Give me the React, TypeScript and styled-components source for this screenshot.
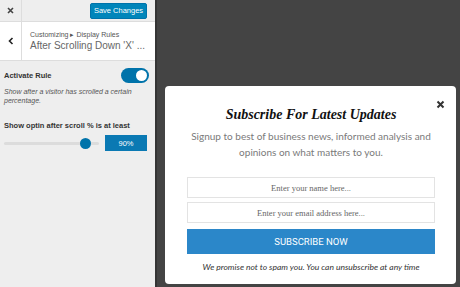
import React from "react";
import styled, { createGlobalStyle } from "styled-components";

const Global = createGlobalStyle`
  html, body { margin: 0; padding: 0; }
  body { font-family: "Liberation Sans", Arial, sans-serif; background: #444; }
`;

const Page = styled.div`
  display: flex;
  width: 460px;
  height: 287px;
  overflow: hidden;
  background: #444444;
`;

const Sidebar = styled.aside`
  width: 155px;
  flex: none;
  background: #eeeeee;
  border-right: 2px solid #353535;
  display: flex;
  flex-direction: column;
`;

const TopBar = styled.div`
  height: 21px;
  display: flex;
  align-items: center;
  border-bottom: 1px solid #dddddd;
`;

const IconCell = styled.div<{ $h?: number }>`
  width: 21px;
  align-self: stretch;
  display: flex;
  align-items: center;
  justify-content: center;
  border-right: 1px solid #dddddd;
  color: #444;
  flex: none;
`;

const SaveButton = styled.button`
  margin-left: auto;
  margin-right: 8px;
  height: 16px;
  width: 57px;
  padding: 0;
  border: 1px solid #0073aa;
  border-radius: 2px;
  background: #0085ba;
  color: #fff;
  font-family: "Liberation Sans", Arial, sans-serif;
  font-size: 7.5px;
  line-height: 14px;
`;

const Header = styled.div`
  height: 38px;
  display: flex;
  background: #fff;
  border-bottom: 1px solid #dddddd;
`;

const HeaderText = styled.div`
  padding-left: 8px;
  display: flex;
  flex-direction: column;
  justify-content: center;
  min-width: 0;
`;

const Crumb = styled.div`
  font-size: 7px;
  line-height: 9px;
  color: #555;
`;

const PaneTitle = styled.div`
  font-size: 10px;
  line-height: 13px;
  color: #666;
  white-space: nowrap;
`;

const Section = styled.div`
  padding: 7px 6px 0 4px;
  display: flex;
  flex-direction: column;
`;

const ToggleRow = styled.div`
  display: flex;
  align-items: center;
  justify-content: space-between;
  height: 15px;
`;

const Label = styled.div`
  font-size: 7.5px;
  font-weight: bold;
  color: #333;
`;

const Toggle = styled.div<{ $on: boolean }>`
  width: 28px;
  height: 15px;
  border-radius: 8px;
  background: ${(p) => (p.$on ? "#0073aa" : "#ccc")};
  position: relative;
  flex: none;
  &::after {
    content: "";
    position: absolute;
    top: 2px;
    left: ${(p) => (p.$on ? "15px" : "2px")};
    width: 11px;
    height: 11px;
    border-radius: 50%;
    background: #fff;
  }
`;

const Description = styled.div`
  margin-top: 4px;
  font-size: 7px;
  line-height: 9px;
  font-style: italic;
  color: #555;
`;

const SliderLabel = styled(Label)`
  margin-top: 16px;
`;

const SliderRow = styled.div`
  margin-top: 5px;
  display: flex;
  align-items: center;
  height: 16px;
  padding-right: 2px;
`;

const Track = styled.div`
  flex: none;
  width: 95px;
  height: 3px;
  border-radius: 2px;
  background: #dcdcdc;
  position: relative;
`;

const Thumb = styled.div`
  position: absolute;
  top: -4px;
  width: 11px;
  height: 11px;
  margin-left: -5.5px;
  border-radius: 50%;
  background: #0073aa;
`;

const ValueBox = styled.div`
  margin-left: auto;
  width: 42px;
  height: 16px;
  background: #0a79b3;
  color: #fff;
  font-size: 7.5px;
  display: flex;
  align-items: center;
  justify-content: center;
`;

const Preview = styled.main`
  flex: 1;
  padding: 86px 0 0 8px;
`;

const Modal = styled.div`
  width: 291px;
  height: 198px;
  box-sizing: border-box;
  background: #fff;
  border-radius: 4px;
  position: relative;
  display: flex;
  flex-direction: column;
  align-items: center;
  padding: 20px 21px 0 22px;
`;

const Close = styled.div`
  position: absolute;
  top: 9px;
  right: 11px;
  width: 9px;
  height: 9px;
`;

const Title = styled.h2`
  margin: 0;
  font-family: "Liberation Serif", "Times New Roman", serif;
  font-style: italic;
  font-weight: bold;
  font-size: 14px;
  line-height: 18px;
  color: #111;
`;

const Sub = styled.p`
  margin: 4px 0 0;
  font-family: Lato, "Open Sans", sans-serif;
  font-size: 10px;
  line-height: 16px;
  color: #7a7a7a;
  text-align: center;
`;

const Form = styled.div`
  margin-top: 17px;
  width: 100%;
  display: flex;
  flex-direction: column;
  gap: 4px;
`;

const Field = styled.input`
  box-sizing: border-box;
  width: 100%;
  height: 21px;
  border: 1px solid #e3e3e3;
  background: #fff;
  text-align: center;
  font-family: "Liberation Serif", "Times New Roman", serif;
  font-size: 8.5px;
  outline: none;
  &::placeholder { color: #666; }
`;

const Subscribe = styled.button`
  margin-top: 2px;
  height: 25px;
  width: 100%;
  border: none;
  background: #2b87c9;
  color: #fff;
  font-family: Roboto, "Liberation Sans", sans-serif;
  font-size: 9.5px;
  letter-spacing: 0;
`;

const Note = styled.p`
  margin: 8px 0 0;
  font-family: Lato, "Open Sans", sans-serif;
  font-style: italic;
  font-size: 8.5px;
  color: #333;
`;

export default function App() {
  return (
    <>
      <Global />
      <Page>
        <Sidebar>
          <TopBar>
            <IconCell>
              <svg width="7" height="7" viewBox="0 0 7 7">
                <path d="M1 1L6 6M6 1L1 6" stroke="#444" strokeWidth="1.6" />
              </svg>
            </IconCell>
            <SaveButton>Save Changes</SaveButton>
          </TopBar>
          <Header>
            <IconCell>
              <svg width="6" height="8" viewBox="0 0 6 8">
                <path d="M4.5 1L1.5 4L4.5 7" stroke="#222" strokeWidth="1.6" fill="none" />
              </svg>
            </IconCell>
            <HeaderText>
              <Crumb>Customizing ▸ Display Rules</Crumb>
              <PaneTitle>After Scrolling Down 'X' ...</PaneTitle>
            </HeaderText>
          </Header>
          <Section>
            <ToggleRow>
              <Label>Activate Rule</Label>
              <Toggle $on />
            </ToggleRow>
            <Description>
              Show after a visitor has scrolled a certain percentage.
            </Description>
            <SliderLabel>Show optin after scroll % is at least</SliderLabel>
            <SliderRow>
              <Track>
                <Thumb style={{ left: "86%" }} />
              </Track>
              <ValueBox>90%</ValueBox>
            </SliderRow>
          </Section>
        </Sidebar>
        <Preview>
          <Modal>
            <Close>
              <svg width="9" height="9" viewBox="0 0 9 9">
                <path d="M1.5 1.5L7.5 7.5M7.5 1.5L1.5 7.5" stroke="#333" strokeWidth="2" />
              </svg>
            </Close>
            <Title>Subscribe For Latest Updates</Title>
            <Sub>
              Signup to best of business news, informed analysis and
              <br />
              opinions on what matters to you.
            </Sub>
            <Form>
              <Field placeholder="Enter your name here..." />
              <Field placeholder="Enter your email address here..." />
              <Subscribe>SUBSCRIBE NOW</Subscribe>
            </Form>
            <Note>We promise not to spam you. You can unsubscribe at any time</Note>
          </Modal>
        </Preview>
      </Page>
    </>
  );
}
